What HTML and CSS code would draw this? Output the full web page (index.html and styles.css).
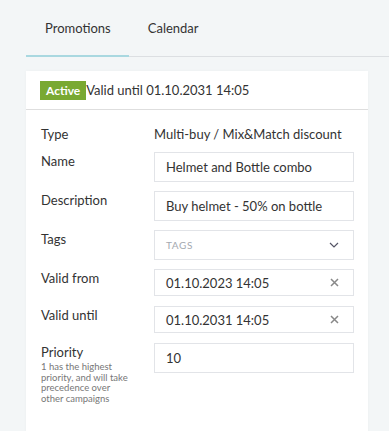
FILE: index.html
```html
<!DOCTYPE html>
<html lang="en">
<head>
    <meta charset="UTF-8">
    <meta name="viewport" content="width=device-width, initial-scale=1.0">
    <title>Promotions</title>
    <link rel="stylesheet" href="styles.css">
</head>
<body>
    <div class="tabs">
        <div class="tab active">Promotions</div>
        <div class="tab">Calendar</div>
    </div>
    <div class="card">
        <div class="card-header">
            <span class="badge">Active</span>
            <span class="header-text">Valid until 01.10.2031 14:05</span>
        </div>
        <div class="card-body">
            <div class="row row-type">
                <div class="label">Type</div>
                <div class="value">Multi-buy / Mix&amp;Match discount</div>
            </div>
            <div class="row">
                <div class="label">Name</div>
                <div class="field">Helmet and Bottle combo</div>
            </div>
            <div class="row">
                <div class="label">Description</div>
                <div class="field">Buy helmet - 50% on bottle</div>
            </div>
            <div class="row">
                <div class="label">Tags</div>
                <div class="field select">
                    <span class="placeholder">TAGS</span>
                    <svg class="chevron" width="10" height="6" viewBox="0 0 10 6"><path d="M1 1l4 4 4-4" fill="none" stroke="#556" stroke-width="1.2"/></svg>
                </div>
            </div>
            <div class="row">
                <div class="label">Valid from</div>
                <div class="field date">
                    <span>01.10.2023 14:05</span>
                    <svg class="clear" width="9" height="9" viewBox="0 0 9 9"><path d="M1 1l7 7M8 1l-7 7" stroke="#888" stroke-width="1.5"/></svg>
                </div>
            </div>
            <div class="row">
                <div class="label">Valid until</div>
                <div class="field date">
                    <span>01.10.2031 14:05</span>
                    <svg class="clear" width="9" height="9" viewBox="0 0 9 9"><path d="M1 1l7 7M8 1l-7 7" stroke="#888" stroke-width="1.5"/></svg>
                </div>
            </div>
            <div class="row">
                <div class="label">
                    Priority
                    <div class="hint">1 has the highest priority, and will take precedence over other campaigns</div>
                </div>
                <div class="field">10</div>
            </div>
            <div class="section-title">MAXIMUM USES</div>
        </div>
    </div>
</body>
</html>
```

FILE: styles.css
```css
body {
    background-color: #f3f6f7;
    font-family: "Lato", "Open Sans", sans-serif;
    color: #333;
    margin: 0;
    padding: 0;
    overflow: hidden;
}
.tabs {
    display: flex;
    margin-left: 26px;
    height: 56px;
    border-bottom: 1px solid #dcdfe2;
}
.tab {
    padding: 0 18px 0 19px;
    font-size: 13px;
    line-height: 56px;
    color: #333;
}
.tab.active {
    border-bottom: 2px solid #a9d8e0;
    margin-bottom: -1px;
}
.card {
    margin: 14px 0 0 26px;
    width: 342px;
    background-color: #fff;
    box-shadow: 0 0 4px rgba(0, 0, 0, 0.03);
}
.card-header {
    display: flex;
    align-items: center;
    height: 38px;
    padding-left: 14px;
    border-bottom: 1px solid #dedede;
}
.badge {
    background-color: #79a932;
    color: #fff;
    font-size: 12px;
    font-weight: bold;
    padding: 2px 6px;
    line-height: 15px;
}
.header-text {
    font-size: 13px;
}
.card-body {
    padding: 15px 14px 0 15px;
}
.row {
    display: flex;
    align-items: flex-start;
    margin-bottom: 9px;
}
.row-type {
    margin-bottom: 8px;
}
.label {
    width: 113px;
    font-size: 13px;
    line-height: 19px;
}
.value {
    font-size: 13px;
    line-height: 19px;
}
.field {
    display: flex;
    align-items: center;
    justify-content: space-between;
    box-sizing: border-box;
    width: 200px;
    height: 30px;
    padding: 0 12px 0 11px;
    border: 1px solid #e2e4e8;
    font-size: 13px;
}
.field.date {
    height: 27px;
    margin-bottom: 1px;
}
.placeholder {
    font-size: 10px;
    letter-spacing: 0.6px;
    color: #a4a9b0;
}
.chevron {
    margin-right: 2px;
}
.clear {
    margin-right: 2px;
}
.hint {
    font-size: 9.5px;
    line-height: 10.5px;
    color: #777;
    width: 90px;
    margin-top: 0;
}
.section-title {
    margin-top: 26px;
    text-align: center;
    font-size: 12px;
    letter-spacing: 1px;
    color: #c8ccd0;
}
```
